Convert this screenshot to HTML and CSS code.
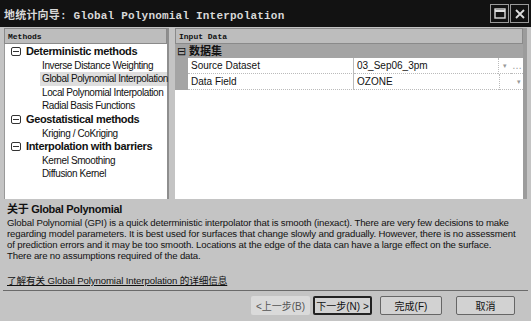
FILE: index.html
```html
<!DOCTYPE html>
<html lang="zh">
<head>
  <meta charset="UTF-8">
  <title>地统计向导</title>
  <link rel="stylesheet" href="styles.css">
</head>
<body>

<div class="window">
  <div class="titlebar">
    <span class="title">地统计向导: Global Polynomial Interpolation</span>
    <div class="caption-btns">
      <span class="cap-btn"><svg width="12" height="11" viewBox="0 0 12 11"><rect x="1" y="1" width="10" height="9" fill="none" stroke="#ddd" stroke-width="1.4"/><line x1="1" y1="3" x2="11" y2="3" stroke="#ddd" stroke-width="2"/></svg></span>
      <span class="cap-btn"><svg width="12" height="12" viewBox="0 0 12 12"><path d="M2 2 L10 10 M10 2 L2 10" stroke="#ddd" stroke-width="1.8"/></svg></span>
    </div>
  </div>

  <div class="main">
    <!-- liste des méthodes -->
    <div class="methods">
      <div class="panel-head">Methods</div>
      <ul class="tree">
        <li class="group"><span class="box"></span>Deterministic methods</li>
        <li class="item">Inverse Distance Weighting</li>
        <li class="item selected">Global Polynomial Interpolation</li>
        <li class="item">Local Polynomial Interpolation</li>
        <li class="item">Radial Basis Functions</li>
        <li class="group"><span class="box"></span>Geostatistical methods</li>
        <li class="item">Kriging / CoKriging</li>
        <li class="group"><span class="box"></span>Interpolation with barriers</li>
        <li class="item">Kernel Smoothing</li>
        <li class="item">Diffusion Kernel</li>
      </ul>
    </div>

    <!-- grille de propriétés -->
    <div class="input-data">
      <div class="panel-head">Input Data</div>
      <div class="category"><span class="minus">⊟</span>数据集</div>
      <div class="prop-row">
        <div class="margin"></div>
        <div class="prop-name">Source Dataset</div>
        <div class="prop-value">03_Sep06_3pm</div>
        <div class="drop">▾</div>
        <div class="dots">…</div>
      </div>
      <div class="prop-row">
        <div class="margin"></div>
        <div class="prop-name">Data Field</div>
        <div class="prop-value">OZONE</div>
        <div class="drop wide">▾</div>
      </div>
      <div class="grid-rest"></div>
    </div>
  </div>

  <div class="about">
    <h3>关于 Global Polynomial</h3>
    <p>Global Polynomial (GPI) is a quick deterministic interpolator that is smooth (inexact). There are very few decisions to make regarding model parameters. It is best used for surfaces that change slowly and gradually. However, there is no assessment of prediction errors and it may be too smooth. Locations at the edge of the data can have a large effect on the surface.<br>There are no assumptions required of the data.</p>
    <a href="#" class="more">了解有关 Global Polynomial Interpolation 的详细信息</a>
  </div>

  <div class="footer">
    <button class="btn disabled">&lt;上一步(B)</button>
    <button class="btn focused">下一步(N) &gt;</button>
    <button class="btn finish">完成(F)</button>
    <button class="btn cancel">取消</button>
  </div>
</div>

</body>
</html>
```

FILE: styles.css
```css
body {
  margin: 0;
  background: #c6c6c6;
  font-family: "Liberation Sans", "Noto Sans CJK SC", sans-serif;
  font-size: 10px;
  color: #111;
}
.window {
  width: 531px;
  height: 321px;
  display: flex;
  flex-direction: column;
  background: #c4c4c4;
  overflow: hidden;
}
.titlebar {
  height: 27px;
  flex-shrink: 0;
  background: #121212;
  display: flex;
  align-items: center;
  justify-content: space-between;
  padding: 0 2px 0 4px;
  box-sizing: border-box;
}
.title {
  color: #d8d8d8;
  font-family: "Liberation Mono", "Noto Sans CJK SC", monospace;
  font-weight: bold;
  font-size: 11px;
  letter-spacing: 0.2px;
}
.caption-btns {
  display: flex;
  gap: 1px;
}
.cap-btn {
  width: 17px;
  height: 17px;
  border: 1px solid #9a9a9a;
  display: flex;
  align-items: center;
  justify-content: center;
}
.main {
  display: flex;
  gap: 6px;
  padding: 1px 4px 0 4px;
  height: 171px;
  flex-shrink: 0;
}
.panel-head {
  height: 16px;
  line-height: 16px;
  background: #bdbdbd;
  border: 1px solid #8a8a8a;
  box-sizing: border-box;
  padding-left: 3px;
  font-family: "Liberation Mono", monospace;
  font-weight: bold;
  font-size: 8px;
}
.methods {
  width: 163px;
  display: flex;
  flex-direction: column;
  border-right: 2px solid #8e8e8e;
}
.tree {
  list-style: none;
  margin: 0;
  padding: 1px 0 0 0;
  flex: 1;
  background: #fff;
  border-left: 1px solid #999;
}
.tree li {
  height: 13.6px;
  line-height: 13.6px;
  white-space: nowrap;
  letter-spacing: -0.4px;
}
.group {
  font-weight: bold;
  font-size: 11px;
  padding-left: 6px;
  display: flex;
  align-items: center;
}
.tree .group {
  letter-spacing: -0.35px;
}
.box {
  width: 8px;
  height: 7px;
  border: 1px solid #333;
  border-radius: 2px;
  margin-right: 5px;
  background: linear-gradient(#333, #333) center / 6px 1px no-repeat;
}
.item {
  padding-left: 37px;
}
.item.selected {
  background: #dedede;
  margin-left: 35px;
  padding-left: 2px;
}
.input-data {
  flex: 1;
  display: flex;
  flex-direction: column;
  border-right: 4px solid #9c9c9c;
}
.category {
  height: 14px;
  line-height: 14px;
  background: #a4a4a4;
  font-weight: bold;
  font-size: 11px;
  display: flex;
  align-items: center;
}
.minus {
  font-size: 11px;
  font-weight: normal;
  width: 12px;
  text-align: center;
  margin-right: 2px;
}
.prop-row {
  display: flex;
  height: 16px;
  line-height: 16px;
  background: #fff;
  font-size: 10px;
}
.margin {
  width: 13px;
  background: #a4a4a4;
}
.prop-name {
  width: 162px;
  padding-left: 3px;
  border-right: 1px solid #bbb;
  border-bottom: 1px dotted #bbb;
}
.prop-value {
  flex: 1;
  padding-left: 3px;
  border-bottom: 1px dotted #bbb;
}
.drop {
  width: 12px;
  font-size: 7px;
  color: #999;
  text-align: center;
  border-left: 1px dotted #bbb;
  border-bottom: 1px dotted #bbb;
}
.drop.wide {
  width: 24px;
  text-align: right;
  padding-right: 2px;
  box-sizing: border-box;
}
.dots {
  width: 12px;
  color: #999;
  text-align: center;
  border-bottom: 1px dotted #bbb;
}
.grid-rest {
  flex: 1;
  background: #fff;
}
.about {
  padding: 4px 11px 0 7px;
  height: 91px;
  box-sizing: border-box;
  flex-shrink: 0;
}
.about h3 {
  margin: 0 0 1px 0;
  font-size: 11px;
  line-height: 13px;
  font-weight: bold;
  letter-spacing: -0.3px;
}
.about p {
  margin: 0;
  line-height: 11px;
  font-size: 9.6px;
  letter-spacing: -0.14px;
}
.more {
  display: inline-block;
  margin-top: 12px;
  color: #111;
  font-size: 9.6px;
  letter-spacing: -0.1px;
}
.footer {
  border-top: 1px solid #6a6a6a;
  margin: 0 3px;
  display: flex;
  align-items: flex-start;
  justify-content: flex-end;
  gap: 3px;
  padding: 5px 13px 0 0;
  flex: 1;
}
.btn {
  font-family: "Liberation Sans", "Noto Sans CJK SC", sans-serif;
  font-size: 10px;
  height: 19px;
  width: 59px;
  padding: 0;
  background: #d2d2d2;
  border: 1px solid #666;
  border-radius: 2px;
  color: #111;
}
.btn.disabled {
  border-color: transparent;
  background: #dadada;
  color: #555;
}
.btn.focused {
  border: 2px solid #222;
}
.btn.finish {
  width: 62px;
  margin-left: 5px;
}
.btn.cancel {
  margin-left: 11px;
}
```
